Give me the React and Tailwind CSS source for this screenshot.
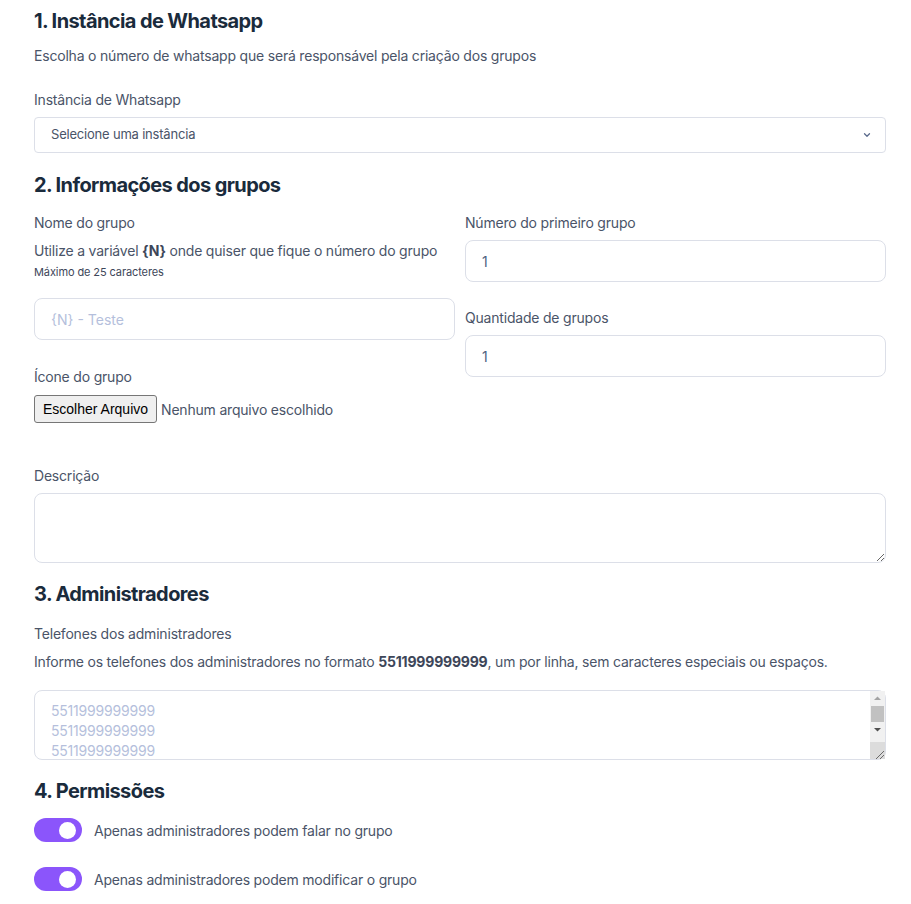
import { ChevronDown } from "lucide-react";

const Label = ({ children, className = "" }) => (
  <p className={`text-[14px] leading-5 tracking-[-0.2px] text-[#4a5468] ${className}`}>{children}</p>
);

const Heading = ({ children, className = "" }) => (
  <h2 className={`text-[20px] leading-7 font-bold tracking-[-0.6px] text-[#1a2b3c] ${className}`}>
    {children}
  </h2>
);

const Toggle = ({ label }) => (
  <label className="flex items-center gap-3">
    <span className="relative inline-flex h-6 w-12 items-center rounded-full bg-[#8b55fb]">
      <span className="absolute right-[6px] h-[17px] w-[17px] rounded-full bg-white" />
    </span>
    <span className="text-[14px] tracking-[-0.2px] text-[#4a5468]">{label}</span>
  </label>
);

const inputCls =
  "w-full h-[42px] rounded-lg border border-[#dcdfe8] bg-white px-4 text-[14px] text-[#4f5f80] placeholder:text-[#b5bfdc] outline-none";

export default function App() {
  return (
    <div className="min-h-screen bg-white font-['Inter',sans-serif] pl-[34px] pr-[25px] pt-[7px] pb-6">
      <Heading>1. Instância de Whatsapp</Heading>
      <Label className="mt-[11px]">
        Escolha o número de whatsapp que será responsável pela criação dos grupos
      </Label>

      <Label className="mt-[24px]">Instância de Whatsapp</Label>
      <div className="mt-[7px] flex h-9 items-center justify-between rounded border border-[#dcdfe8] pl-4 pr-[13px]">
        <span className="text-[13px] tracking-[-0.2px] text-[#4a5468]">Selecione uma instância</span>
        <ChevronDown className="h-[10px] w-[10px] text-[#5a6a8c]" strokeWidth={3} />
      </div>

      <Heading className="mt-[18px]">2. Informações dos grupos</Heading>

      <div className="mt-[14px] grid grid-cols-2 gap-x-[10px]">
        <div>
          <Label>Nome do grupo</Label>
          <Label className="mt-[8px]">
            Utilize a variável <b className="font-bold text-[#3d4659]">{"{N}"}</b> onde quiser que
            fique o número do grupo
          </Label>
          <p className="mt-[3px] text-[11px] leading-4 tracking-[-0.1px] text-[#3d4659]">
            Máximo de 25 caracteres
          </p>
          <input className={`${inputCls} mt-[18px]`} placeholder="{N} - Teste" />
          <Label className="mt-[27px]">Ícone do grupo</Label>
          <div className="mt-[8px] flex items-center gap-1">
            <button className="h-[28px] rounded-[3px] border border-[#767676] bg-[#efefef] px-[8px] font-['Liberation_Sans',Arial,sans-serif] text-[14px] text-black">
              Escolher Arquivo
            </button>
            <span className="text-[14px] tracking-[-0.2px] text-[#4a5468]">Nenhum arquivo escolhido</span>
          </div>
        </div>
        <div>
          <Label>Número do primeiro grupo</Label>
          <input className={`${inputCls} mt-[7px]`} defaultValue="1" />
          <Label className="mt-[26px]">Quantidade de grupos</Label>
          <input className={`${inputCls} mt-[7px]`} defaultValue="1" />
        </div>
      </div>

      <Label className="mt-[43px]">Descrição</Label>
      <textarea className="mt-[7px] block h-[70px] w-full rounded-lg border border-[#dcdfe8] px-4 py-2 text-[14px] outline-none" />

      <Heading className="mt-[17px]">3. Administradores</Heading>
      <Label className="mt-[16px]">Telefones dos administradores</Label>
      <Label className="mt-[8px]">
        Informe os telefones dos administradores no formato{" "}
        <b className="font-bold text-[#3d4659]">5511999999999</b>, um por linha, sem caracteres
        especiais ou espaços.
      </Label>
      <div className="relative mt-[18px]">
        <textarea
          className="block h-[70px] w-full rounded-lg border border-[#dcdfe8] px-4 py-[10px] text-[14px] leading-5 tracking-[-0.2px] text-[#4f5f80] placeholder:text-[#b5bfdc] outline-none"
          placeholder={"5511999999999\n5511999999999\n5511999999999"}
        />
        {/* native-looking scrollbar */}
        <div className="pointer-events-none absolute right-[1px] top-[1px] bottom-[1px] flex w-[15px] flex-col items-center bg-[#f1f1f1]">
          <svg width="15" height="15" viewBox="0 0 15 15" className="shrink-0">
            <path d="M4 9 L7.5 5.5 L11 9 Z" fill="#a3a3a3" />
          </svg>
          <div className="h-[16px] w-[13px] bg-[#c1c1c1]" />
          <svg width="15" height="15" viewBox="0 0 15 15" className="shrink-0">
            <path d="M4 6 L7.5 9.5 L11 6 Z" fill="#505050" />
          </svg>
          <svg width="15" height="17" viewBox="0 0 15 17" className="mt-auto shrink-0">
            <rect width="15" height="17" fill="#dcdcdc" />
            <path d="M14 9 L6 17 M14 13 L10 17" stroke="#6b6b6b" strokeWidth="1" />
          </svg>
        </div>
      </div>

      <Heading className="mt-[17px]">4. Permissões</Heading>
      <div className="mt-[13px] flex flex-col gap-[25px]">
        <Toggle label="Apenas administradores podem falar no grupo" />
        <Toggle label="Apenas administradores podem modificar o grupo" />
      </div>
    </div>
  );
}
